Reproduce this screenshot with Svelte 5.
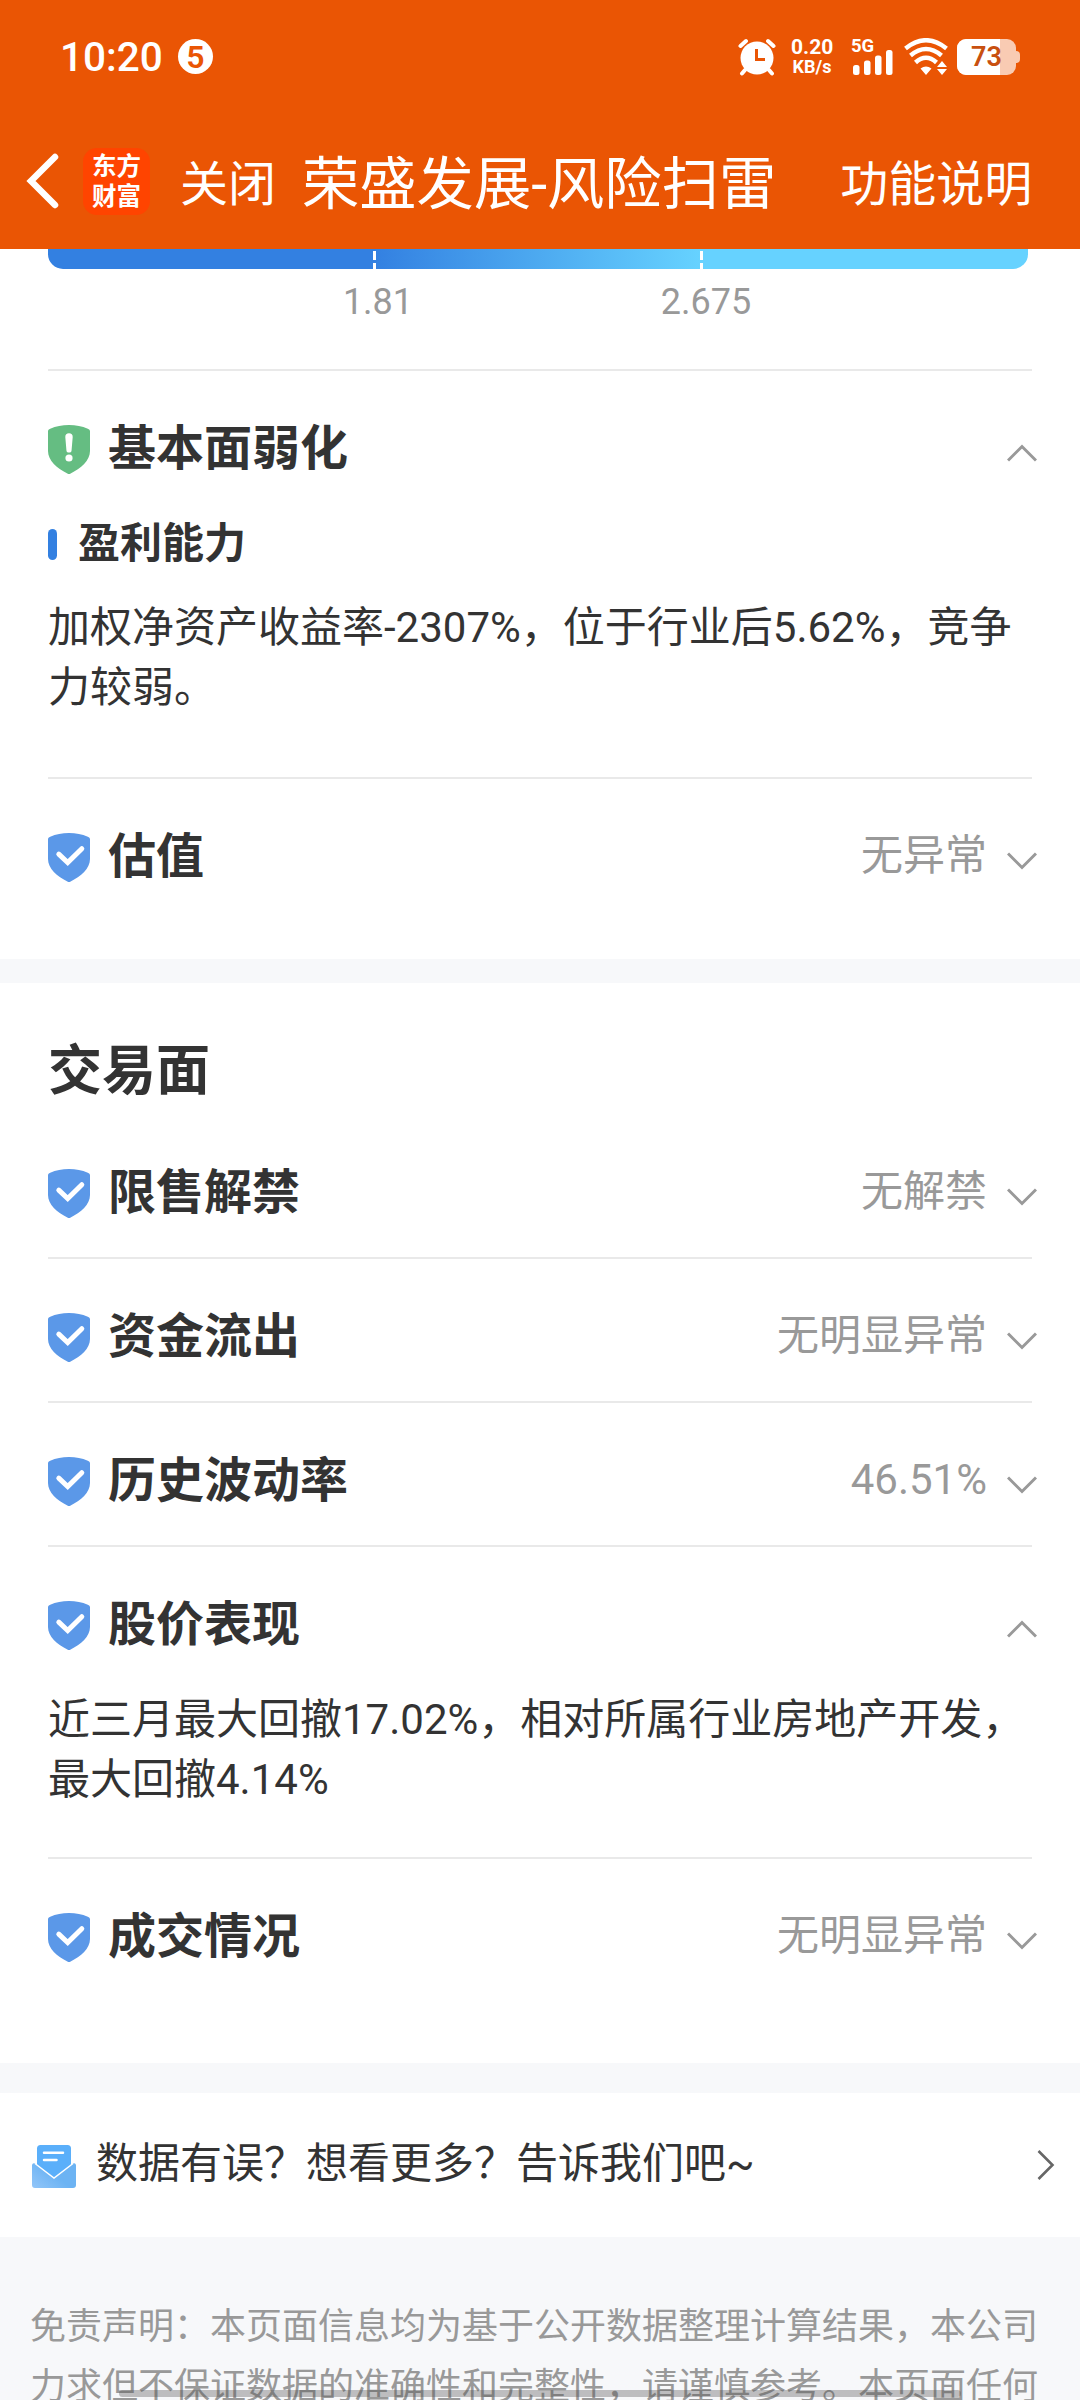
<script>
	let basics = $state([
		{
			name: '基本面弱化',
			level: 'warn',
			open: true,
			sub: '盈利能力',
			text: '加权净资产收益率-2307%，位于行业后5.62%，竞争力较弱。'
		},
		{ name: '估值', level: 'ok', status: '无异常', open: false }
	]);

	let trading = $state([
		{ name: '限售解禁', level: 'ok', status: '无解禁', open: false },
		{ name: '资金流出', level: 'ok', status: '无明显异常', open: false },
		{ name: '历史波动率', level: 'ok', status: '46.51%', open: false },
		{
			name: '股价表现',
			level: 'ok',
			open: true,
			text: '近三月最大回撤17.02%，相对所属行业房地产开发，最大回撤4.14%'
		},
		{ name: '成交情况', level: 'ok', status: '无明显异常', open: false }
	]);

	const battery = 73;
</script>

{#snippet riskItem(item)}
	<div class="item">
		<div class="head" role="button" tabindex="-1" onclick={() => (item.open = !item.open)} onkeydown={() => {}}>
			<svg class="shield" width="42" height="49" viewBox="0 0 42 49">
				<path
					fill={item.level == 'warn' ? '#65bd82' : '#5b98e8'}
					d="M0 6.5C0 5 .8 4.200 2.200 3.700 8 1.200 14 0 21 0s13 1.200 18.800 3.700C41.200 4.200 42 5 42 6.500V26c0 9.500-9 17.500-19.800 22.700a2.800 2.800 0 0 1-2.400 0C9 43.500 0 35.500 0 26z"
				/>
				{#if item.level == 'warn'}
					<path fill="#fff" d="M17.300 12a3.700 3.700 0 0 1 7.400 0l-1.100 13a2.600 2.600 0 0 1-5.200 0z" />
					<circle cx="21" cy="33" r="3.600" fill="#fff" />
				{:else}
					<path
						fill="none"
						stroke="#fff"
						stroke-width="5"
						stroke-linecap="round"
						d="M10.800 21.200 19.700 29.500 33.800 15.700"
					/>
				{/if}
			</svg>
			<span class="name">{item.name}</span>
			{#if item.status}
				<span class="status">{item.status}</span>
			{/if}
			<svg class="arrow" width="30" height="18" viewBox="0 0 30 18">
				<path
					fill="none"
					stroke="#999"
					stroke-width="3"
					d={item.open ? 'M1 16.500 15 2.500 29 16.500' : 'M1 1.500 15 15.500 29 1.500'}
				/>
			</svg>
		</div>
		{#if item.open && item.sub}
			<div class="sub">{item.sub}</div>
		{/if}
		{#if item.open && item.text}
			<p class:tight={item.sub}>{item.text}</p>
		{/if}
	</div>
{/snippet}

<div class="page">
	<header>
		<div class="statusbar">
			<span class="time">10:20</span>
			<span class="count">5</span>
			<div class="icons">
				<svg width="38" height="38" viewBox="0 0 38 38">
					<circle cx="19" cy="20" r="16.500" fill="#fff" />
					<path fill="none" stroke="#fff" stroke-width="4" stroke-linecap="round" d="M2.500 8 8 3M35.500 8 30 3M7 32l-3 3.500M31 32l3 3.500" />
					<path fill="none" stroke="#ea5504" stroke-width="3" d="M18.500 11v10.500H27" />
				</svg>
				<div class="speed"><b>0.20</b><i>KB/s</i></div>
				<div class="signal">
					<b>5G</b>
					<svg width="40" height="25" viewBox="0 0 40 25">
						<g fill="#fff">
							<rect x="0" y="15" width="6.500" height="10" rx="2.500" />
							<rect x="11" y="10.500" width="6.500" height="14.500" rx="2.500" />
							<rect x="22" y="5.500" width="6.500" height="19.500" rx="2.500" />
							<rect x="33" y="0" width="6.500" height="25" rx="2.500" />
						</g>
					</svg>
				</div>
				<svg class="wifi" width="44" height="38" viewBox="0 0 44 38">
					<g fill="none" stroke="#fff" stroke-width="4.500">
						<path d="M1.500 10.500Q22-6 42.500 10.500" />
						<path d="M6.500 17.500Q22 4.500 37.500 17.500" />
						<path d="M11.500 24.500Q22 15 32.500 24.500" />
					</g>
					<path fill="#fff" d="M16.500 30.500q5.500-4 11 0L22 37zM38 23l5 6H33zM38 37l5-6H33z" />
				</svg>
				<div class="battery">
					<div class="cell"><div class="level" style="width: {battery}%"></div><span>{battery}</span></div>
					<div class="tip"></div>
				</div>
			</div>
		</div>
		<nav>
			<svg class="back" width="36" height="60" viewBox="0 0 36 60">
				<path fill="none" stroke="#fff" stroke-width="6.500" stroke-linecap="round" d="M30 6 6 30 30 54" />
			</svg>
			<div class="logo">东方<br />财富</div>
			<span class="close">关闭</span>
			<h1>荣盛发展-风险扫雷</h1>
			<span class="help">功能说明</span>
		</nav>
	</header>

	<section class="basic">
		<div class="scale">
			<div class="seg low"></div>
			<div class="seg mid"></div>
			<div class="seg high"></div>
		</div>
		<div class="marks"><span>1.81</span><span>2.675</span></div>
		{#each basics as item}
			{@render riskItem(item)}
		{/each}
	</section>

	<section class="trade">
		<h2>交易面</h2>
		{#each trading as item}
			{@render riskItem(item)}
		{/each}
	</section>

	<div class="feedback">
		<svg class="mail" width="44" height="46" viewBox="0 0 44 46">
			<defs>
				<linearGradient id="env" x1="0" y1="1" x2="1" y2="0.300">
					<stop offset="0" stop-color="#93c6f9" />
					<stop offset="0.600" stop-color="#6cb3f3" />
					<stop offset="1" stop-color="#6cb3f3" />
				</linearGradient>
			</defs>
			<rect x="5" y="1" width="34" height="38" rx="3.500" fill="#5aaffa" />
			<path stroke="#fff" stroke-width="2.500" stroke-linecap="round" d="M12 8.700h19M12 16h12.500" />
			<path fill="url(#env)" d="M0 21q.500-2.500 3-1.500L22 34 41 19.500q2.500-1 3 1.500v20q0 3-3 3H3q-3 0-3-3z" />
			<path fill="none" stroke="#fff" stroke-width="1.500" d="M3 19.500 22 34 41 19.500" />
		</svg>
		<span>数据有误？想看更多？告诉我们吧~</span>
		<svg class="go" width="18" height="30" viewBox="0 0 18 30">
			<path fill="none" stroke="#666" stroke-width="2.600" d="M1.500 1 15.500 15 1.500 29" />
		</svg>
	</div>

	<footer>免责声明：本页面信息均为基于公开数据整理计算结果，本公司力求但不保证数据的准确性和完整性，请谨慎参考。本页面任何</footer>
	<div class="homebar"></div>
</div>

<style>
:global(body) {
	margin: 0;
}

.page {
	position: relative;
	width: 1080px;
	height: 2400px;
	overflow: hidden;
	background: #f7f8fa;
	color: #333;
	font-family: Roboto, "Noto Sans CJK SC", sans-serif;
}

header {
	height: 249px;
	background: #ea5504;
	color: #fff;
}

.statusbar {
	display: flex;
	align-items: center;
	height: 113px;
	padding: 0 60px;
}

.time {
	width: 118px;
	font-size: 40.500px;
	font-weight: 500;
}

.count {
	width: 35px;
	height: 35px;
	border-radius: 50%;
	background: #fff;
	color: #ea5504;
	font-size: 32px;
	font-weight: 600;
	line-height: 36px;
	text-align: center;
}

.icons {
	display: flex;
	align-items: center;
	margin-left: auto;
}

.speed {
	display: flex;
	flex-direction: column;
	width: 42px;
	margin: 0 18px 0 15px;
	text-align: center;
	font-size: 21px;
	line-height: 20px;
}

.speed i {
	font-size: 18px;
	font-style: normal;
	font-weight: 700;
}

.signal {
	display: flex;
	flex-direction: column;
	width: 43px;
	height: 38px;
	font-size: 18.500px;
	line-height: 16px;
}

.signal svg {
	margin: -4px 0 0 2px;
}

.wifi {
	margin: 0 9px 0 10px;
}

.battery {
	display: flex;
	align-items: center;
}

.cell {
	position: relative;
	width: 59px;
	height: 36px;
	overflow: hidden;
	border-radius: 9px;
	background: #f9cbb3;
}

.level {
	height: 100%;
	background: #fff;
}

.cell span {
	position: absolute;
	inset: 0;
	color: #c8500f;
	font-size: 27px;
	font-weight: 600;
	line-height: 36px;
	text-align: center;
}

.tip {
	width: 4px;
	height: 12px;
	border-radius: 0 4px 4px 0;
	background: #f9cbb3;
}

nav {
	display: flex;
	align-items: center;
	height: 136px;
	padding-left: 25px;
	font-size: 48px;
	line-height: 72px;
}

.logo {
	width: 67px;
	height: 60px;
	margin: 0 30px 0 22px;
	padding: 4px 0 3px;
	border-radius: 14px;
	background: #ff4400;
	font-size: 24.500px;
	font-weight: 700;
	line-height: 30px;
	text-align: center;
}

.close,
.help {
	padding-top: 8px;
}

h1 {
	margin: 0 0 0 26px;
	padding-top: 8px;
	font-size: 57.300px;
	font-weight: 400;
}

.help {
	margin-left: 64px;
}

section {
	background: #fff;
	padding: 0 48px;
}

.basic {
	height: 710px;
	margin-bottom: 24px;
}

.scale {
	display: flex;
	width: 980px;
	height: 20px;
	overflow: hidden;
	border-radius: 0 0 15px 15px;
}

.seg {
	width: 325px;
	background: #3380e1;
}

.mid {
	width: 327px;
	background: repeating-linear-gradient(#fff0 0 2px, #fff 2px 11px, #fff0 11px 14px, #fff 14px 20px) left / 3px 100% no-repeat,
		linear-gradient(90deg, #3380e1, #66d2ff);
}

.high {
	width: 328px;
	background: repeating-linear-gradient(#fff0 0 2px, #fff 2px 11px, #fff0 11px 14px, #fff 14px 20px) left / 3px 100% no-repeat,
		#66d2ff;
}

.marks {
	display: flex;
	height: 65px;
	padding: 0 0 35px 166px;
	border-bottom: 2px solid #e9e9e9;
	color: #999;
	font-size: 36px;
	line-height: 66px;
}

.marks span {
	width: 328px;
	text-align: center;
}

.item {
	padding: 54px 0 40px;
	border-bottom: 2px solid #e9e9e9;
}

.item:last-child {
	border: 0;
}

.head {
	display: flex;
	align-items: center;
	height: 48px;
}

.name {
	margin-left: 18px;
	font-size: 48px;
	font-weight: 700;
	line-height: 48px;
}

.status {
	margin: 0 0 2px auto;
	color: #999;
	font-size: 42px;
	line-height: 48px;
}

.arrow {
	margin: 7px -5px 0 auto;
}

.status + .arrow {
	margin-left: 20px;
}

.sub {
	display: flex;
	align-items: center;
	margin-top: 41px;
	font-size: 42px;
	font-weight: 700;
	line-height: 60px;
}

.sub::before {
	content: "";
	width: 9px;
	height: 31px;
	margin-right: 21px;
	border-radius: 5px;
	background: #3380e1;
}

p {
	margin: 41px 0 7px;
	font-size: 42px;
	line-height: 60px;
}

p.tight {
	margin: 24px 0 19px;
}

.trade {
	height: 1080px;
}

h2 {
	margin: 0 0 13px;
	padding-top: 59px;
	font-size: 54px;
	font-weight: 700;
	line-height: 60px;
}

.feedback {
	display: flex;
	align-items: center;
	height: 144px;
	margin-top: 30px;
	padding: 0 25px 0 32px;
	background: #fff;
	font-size: 42px;
	line-height: 60px;
}

.mail {
	margin-top: 3px;
}

.feedback span {
	margin: 0 0 3px 20px;
}

.go {
	margin-left: auto;
}

footer {
	padding: 60px 30px;
	color: #999;
	font-size: 36px;
	line-height: 60px;
}

.homebar {
	position: absolute;
	left: 119px;
	bottom: 3px;
	width: 842px;
	height: 7px;
	border-radius: 4px;
	background: rgba(80, 80, 80, 0.35);
}
</style>
